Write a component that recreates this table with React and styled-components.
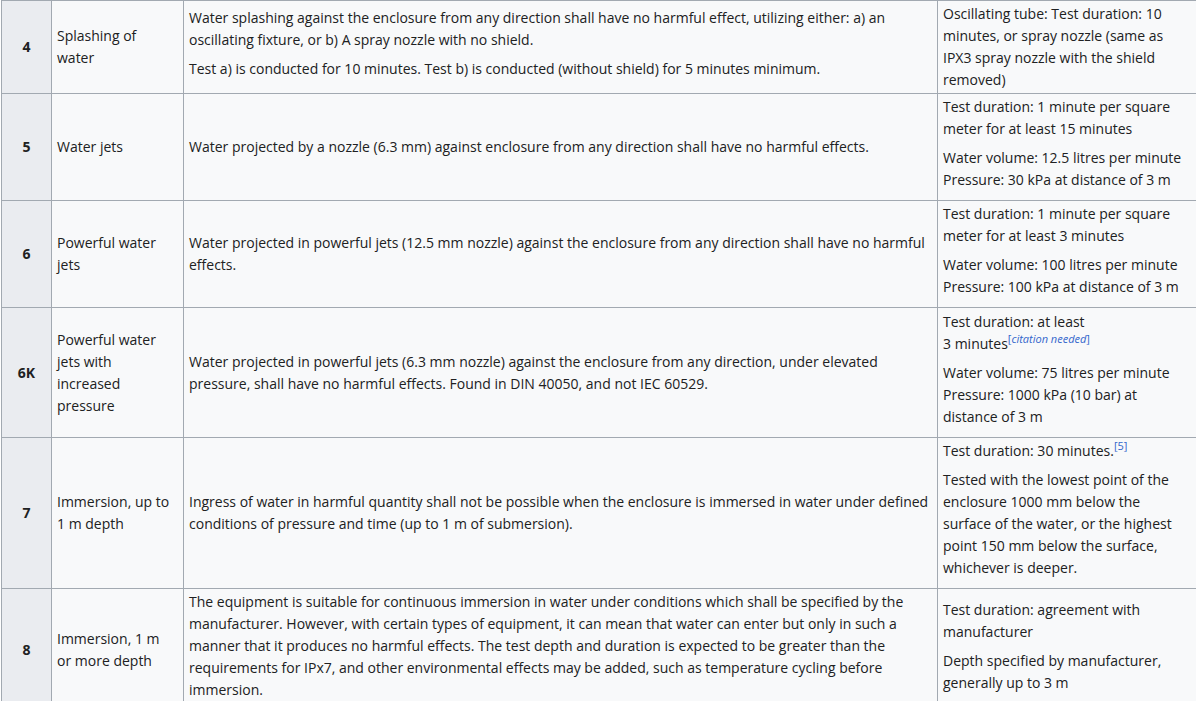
import React from "react";
import styled, { createGlobalStyle } from "styled-components";

const GlobalStyle = createGlobalStyle`
  html, body {
    margin: 0;
    padding: 0;
    background: #ffffff;
    overflow: hidden;
  }
  body {
    font-family: "Open Sans", "Liberation Sans", Arial, sans-serif;
    font-size: 14px;
    color: #202122;
  }
`;

const Table = styled.table`
  border-collapse: collapse;
  table-layout: fixed;
  width: 1202px;
  margin-left: 1px;
  background: #f8f9fa;
  color: #202122;
  line-height: 22px;
`;

const Col = styled.col`
  width: ${({ w }) => w}px;
`;

const Row = styled.tr`
  height: ${({ h }) => h}px;
`;

const Level = styled.th`
  background: #eaecf0;
  border: 1px solid #a2a9b1;
  font-weight: bold;
  text-align: center;
  vertical-align: middle;
  padding: 2px 6px;
`;

const Cell = styled.td`
  border: 1px solid #a2a9b1;
  vertical-align: middle;
  padding: 2px ${({ $padRight }) => $padRight || 6}px 2px 5px;
`;

const Para = styled.p`
  margin: 0 0 7px;
`;

const Sup = styled.sup`
  font-size: 11px;
  line-height: 0;
  vertical-align: super;
  color: #202122;
`;

const Ref = styled.a`
  color: #3366cc;
  text-decoration: none;
  white-space: nowrap;
`;

const Italic = styled.i`
  font-style: italic;
  color: #3366cc;
`;

const rows = [
  {
    level: "4",
    h: 93,
    name: "Splashing of water",
    desc: [
      "Water splashing against the enclosure from any direction shall have no harmful effect, utilizing either: a) an oscillating fixture, or b) A spray nozzle with no shield.",
      "Test a) is conducted for 10 minutes. Test b) is conducted (without shield) for 5 minutes minimum.",
    ],
    test: [
      ["Oscillating tube: Test duration: 10 minutes, or spray nozzle (same as IPX3 spray nozzle with the shield removed)"],
    ],
  },
  {
    level: "5",
    h: 107,
    name: "Water jets",
    desc: [
      "Water projected by a nozzle (6.3 mm) against enclosure from any direction shall have no harmful effects.",
    ],
    test: [
      ["Test duration: 1 minute per square meter for at least 15 minutes"],
      ["Water volume: 12.5 litres per minute", "Pressure: 30 kPa at distance of 3 m"],
    ],
  },
  {
    level: "6",
    h: 106,
    name: "Powerful water jets",
    desc: [
      "Water projected in powerful jets (12.5 mm nozzle) against the enclosure from any direction shall have no harmful effects.",
    ],
    test: [
      ["Test duration: 1 minute per square meter for at least 3 minutes"],
      ["Water volume: 100 litres per minute", "Pressure: 100 kPa at distance of 3 m"],
    ],
  },
  {
    level: "6K",
    h: 130,
    name: "Powerful water jets with increased pressure",
    desc: [
      "Water projected in powerful jets (6.3 mm nozzle) against the enclosure from any direction, under elevated pressure, shall have no harmful effects. Found in DIN 40050, and not IEC 60529.",
    ],
    test: [
      ["cite"],
      ["Water volume: 75 litres per minute", "Pressure: 1000 kPa (10 bar) at distance of 3 m"],
    ],
  },
  {
    level: "7",
    h: 150,
    name: "Immersion, up to 1 m depth",
    desc: [
      "Ingress of water in harmful quantity shall not be possible when the enclosure is immersed in water under defined conditions of pressure and time (up to 1 m of submersion).",
    ],
    test: [
      ["ref"],
      ["Tested with the lowest point of the enclosure 1000 mm below the surface of the water, or the highest point 150 mm below the surface, whichever is deeper."],
    ],
  },
  {
    level: "8",
    h: 120,
    name: "Immersion, 1 m or more depth",
    paraDesc: true,
    desc: [
      "The equipment is suitable for continuous immersion in water under conditions which shall be specified by the manufacturer. However, with certain types of equipment, it can mean that water can enter but only in such a manner that it produces no harmful effects. The test depth and duration is expected to be greater than the requirements for IPx7, and other environmental effects may be added, such as temperature cycling before immersion.",
    ],
    test: [
      ["Test duration: agreement with manufacturer"],
      ["Depth specified by manufacturer, generally up to 3 m"],
    ],
  },
];

const renderLine = (line) => {
  if (line === "cite") {
    return (
      <>
        Test duration: at least
        <br />3 minutes
        <Sup>
          <Ref>
            [<Italic>citation needed</Italic>]
          </Ref>
        </Sup>
      </>
    );
  }
  if (line === "ref") {
    return (
      <>
        Test duration: 30 minutes.
        <Sup>
          <Ref>[5]</Ref>
        </Sup>
      </>
    );
  }
  return line;
};

const renderGroup = (group) =>
  group.map((line, j) => (
    <React.Fragment key={j}>
      {j > 0 && <br />}
      {renderLine(line)}
    </React.Fragment>
  ));

const App = () => (
  <>
    <GlobalStyle />
    <Table>
      <colgroup>
        <Col w={50} />
        <Col w={132} />
        <Col w={754} />
        <Col w={266} />
      </colgroup>
      <tbody>
        {rows.map((row) => (
          <Row key={row.level} h={row.h}>
            <Level>{row.level}</Level>
            <Cell>{row.name}</Cell>
            <Cell>
              {row.desc.length > 1 || row.paraDesc
                ? row.desc.map((text, i) => <Para key={i}>{text}</Para>)
                : row.desc[0]}
            </Cell>
            <Cell $padRight={16}>
              {row.test.length > 1
                ? row.test.map((group, i) => (
                    <Para key={i}>{renderGroup(group)}</Para>
                  ))
                : renderGroup(row.test[0])}
            </Cell>
          </Row>
        ))}
      </tbody>
    </Table>
  </>
);

export default App;
